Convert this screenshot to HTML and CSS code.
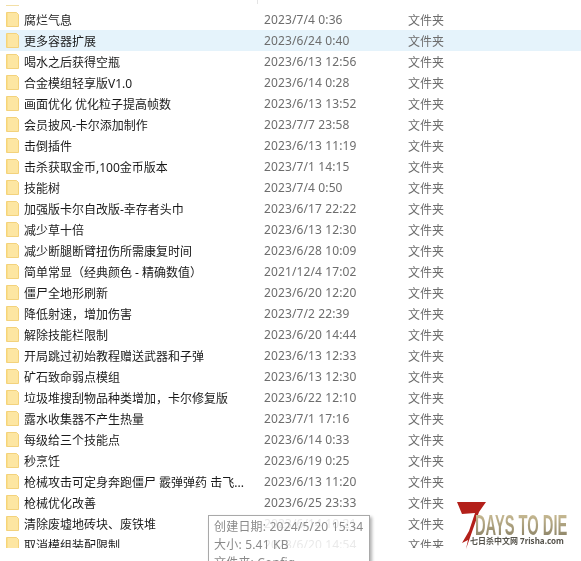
FILE: index.html
```html
<!DOCTYPE html>
<html lang="zh-CN">
<head>
    <meta charset="UTF-8">
    <title>文件夹列表</title>
    <link rel="stylesheet" href="styles.css">
</head>
<body>
    <svg class="defs" width="0" height="0">
        <symbol id="folder" viewBox="0 0 13 15">
            <path d="M0.5 0.5H10.5L12.5 2.5V14.5H0.5Z" fill="#fde6a2" stroke="#f3d27c"/>
            <path d="M1 1V14" stroke="#f8d675" fill="none"/>
        </symbol>
    </svg>

    <div class="col-tick"></div>
    <div class="file-list">
        <div class="stub"></div>
        <div class="row"><svg class="folder"><use href="#folder"/></svg><span class="name">腐烂气息</span><span class="date">2023/7/4 0:36</span><span class="type">文件夹</span></div>
        <div class="row hover"><svg class="folder"><use href="#folder"/></svg><span class="name">更多容器扩展</span><span class="date">2023/6/24 0:40</span><span class="type">文件夹</span></div>
        <div class="row"><svg class="folder"><use href="#folder"/></svg><span class="name">喝水之后获得空瓶</span><span class="date">2023/6/13 12:56</span><span class="type">文件夹</span></div>
        <div class="row"><svg class="folder"><use href="#folder"/></svg><span class="name">合金模组轻享版V1.0</span><span class="date">2023/6/14 0:28</span><span class="type">文件夹</span></div>
        <div class="row"><svg class="folder"><use href="#folder"/></svg><span class="name">画面优化 优化粒子提高帧数</span><span class="date">2023/6/13 13:52</span><span class="type">文件夹</span></div>
        <div class="row"><svg class="folder"><use href="#folder"/></svg><span class="name">会员披风-卡尔添加制作</span><span class="date">2023/7/7 23:58</span><span class="type">文件夹</span></div>
        <div class="row"><svg class="folder"><use href="#folder"/></svg><span class="name">击倒插件</span><span class="date">2023/6/13 11:19</span><span class="type">文件夹</span></div>
        <div class="row"><svg class="folder"><use href="#folder"/></svg><span class="name">击杀获取金币,100金币版本</span><span class="date">2023/7/1 14:15</span><span class="type">文件夹</span></div>
        <div class="row"><svg class="folder"><use href="#folder"/></svg><span class="name">技能树</span><span class="date">2023/7/4 0:50</span><span class="type">文件夹</span></div>
        <div class="row"><svg class="folder"><use href="#folder"/></svg><span class="name">加强版卡尔自改版-幸存者头巾</span><span class="date">2023/6/17 22:22</span><span class="type">文件夹</span></div>
        <div class="row"><svg class="folder"><use href="#folder"/></svg><span class="name">减少草十倍</span><span class="date">2023/6/13 12:30</span><span class="type">文件夹</span></div>
        <div class="row"><svg class="folder"><use href="#folder"/></svg><span class="name">减少断腿断臂扭伤所需康复时间</span><span class="date">2023/6/28 10:09</span><span class="type">文件夹</span></div>
        <div class="row"><svg class="folder"><use href="#folder"/></svg><span class="name">简单常显（经典颜色 - 精确数值）</span><span class="date">2021/12/4 17:02</span><span class="type">文件夹</span></div>
        <div class="row"><svg class="folder"><use href="#folder"/></svg><span class="name">僵尸全地形刷新</span><span class="date">2023/6/20 12:20</span><span class="type">文件夹</span></div>
        <div class="row"><svg class="folder"><use href="#folder"/></svg><span class="name">降低射速，增加伤害</span><span class="date">2023/7/2 22:39</span><span class="type">文件夹</span></div>
        <div class="row"><svg class="folder"><use href="#folder"/></svg><span class="name">解除技能栏限制</span><span class="date">2023/6/20 14:44</span><span class="type">文件夹</span></div>
        <div class="row"><svg class="folder"><use href="#folder"/></svg><span class="name">开局跳过初始教程赠送武器和子弹</span><span class="date">2023/6/13 12:33</span><span class="type">文件夹</span></div>
        <div class="row"><svg class="folder"><use href="#folder"/></svg><span class="name">矿石致命弱点模组</span><span class="date">2023/6/13 12:30</span><span class="type">文件夹</span></div>
        <div class="row"><svg class="folder"><use href="#folder"/></svg><span class="name">垃圾堆搜刮物品种类增加，卡尔修复版</span><span class="date">2023/6/22 12:10</span><span class="type">文件夹</span></div>
        <div class="row"><svg class="folder"><use href="#folder"/></svg><span class="name">露水收集器不产生热量</span><span class="date">2023/7/1 17:16</span><span class="type">文件夹</span></div>
        <div class="row"><svg class="folder"><use href="#folder"/></svg><span class="name">每级给三个技能点</span><span class="date">2023/6/14 0:33</span><span class="type">文件夹</span></div>
        <div class="row"><svg class="folder"><use href="#folder"/></svg><span class="name">秒烹饪</span><span class="date">2023/6/19 0:25</span><span class="type">文件夹</span></div>
        <div class="row"><svg class="folder"><use href="#folder"/></svg><span class="name">枪械攻击可定身奔跑僵尸 霰弹弹药 击飞...</span><span class="date">2023/6/13 11:20</span><span class="type">文件夹</span></div>
        <div class="row"><svg class="folder"><use href="#folder"/></svg><span class="name">枪械优化改善</span><span class="date">2023/6/25 23:33</span><span class="type">文件夹</span></div>
        <div class="row"><svg class="folder"><use href="#folder"/></svg><span class="name">清除废墟地砖块、废铁堆</span><span class="date">2023/6/14 10:21</span><span class="type">文件夹</span></div>
        <div class="row"><svg class="folder"><use href="#folder"/></svg><span class="name">取消模组装配限制</span><span class="date">2023/6/20 14:54</span><span class="type">文件夹</span></div>
    </div>

    <!-- hover tooltip, runs off the bottom of the shot -->
    <div class="tooltip">
        <div>创建日期: 2024/5/20 15:34</div>
        <div>大小: 5.41 KB</div>
        <div>文件夹: Config</div>
    </div>

    <div class="logo">
        <svg class="logo-seven" viewBox="0 0 30 48">
            <path d="M1 0H30L23 10L10 47L12 38L6 41L13 29L19 11L6 12Z" fill="#b3201a"/>
        </svg>
        <div class="logo-title">DAYS TO DIE</div>
        <div class="logo-sub">七日杀中文网 7risha.com</div>
    </div>
</body>
</html>
```

FILE: styles.css
```css
* {
    margin: 0;
    padding: 0;
    box-sizing: border-box;
}

html, body {
    height: 100%;
    overflow: hidden;
}

body {
    position: relative;
    background: #fff;
    font-family: "Noto Sans", "Noto Sans CJK SC", sans-serif;
    font-size: 12px;
    color: #1a1a1a;
    filter: blur(0.3px);
}

.defs {
    position: absolute;
}

.col-tick {
    position: absolute;
    top: 0;
    left: 257px;
    width: 1px;
    height: 4px;
    background: #e4e4e4;
}

.file-list {
    height: 548px;
    overflow: hidden;
    padding-top: 9px;
}

.stub {
    position: absolute;
    top: 5px;
    left: 6px;
    width: 13px;
    height: 1px;
    background: #f3dfa6;
}

.row {
    display: flex;
    align-items: center;
    height: 21px;
    white-space: nowrap;
}

.row.hover {
    background: #e5f3fb;
}

.folder {
    flex: none;
    width: 13px;
    height: 15px;
    margin-left: 6px;
}

.name {
    width: 240px;
    margin-left: 5px;
}

.date {
    width: 144px;
    color: #6d6d6d;
    letter-spacing: 0.12px;
}

.type {
    color: #6d6d6d;
}

.tooltip {
    position: absolute;
    left: 208px;
    top: 515px;
    width: 162px;
    height: 60px;
    padding: 2px 5px;
    border: 1px solid #a9a9a9;
    background: rgba(255, 255, 255, 0.85);
    box-shadow: 2px 2px 3px rgba(0, 0, 0, 0.3);
    color: #8a8a8a;
    line-height: 18px;
    letter-spacing: 0.2px;
}

.logo {
    position: absolute;
    left: 456px;
    top: 502px;
    width: 125px;
    height: 50px;
}

.logo-seven {
    position: absolute;
    left: 0;
    top: 0;
    width: 30px;
    height: 48px;
}

.logo-title {
    position: absolute;
    left: 19px;
    top: 11px;
    font-family: "Liberation Sans", sans-serif;
    font-size: 30px;
    font-weight: 700;
    line-height: 24px;
    white-space: nowrap;
    color: #a89a78;
    background: linear-gradient(#cbbd95, #8d8468);
    -webkit-background-clip: text;
    background-clip: text;
    -webkit-text-fill-color: transparent;
    transform: scaleX(0.49);
    transform-origin: left top;
}

.logo-sub {
    position: absolute;
    left: 14px;
    top: 35px;
    font-size: 8px;
    font-weight: 700;
    line-height: 8px;
    white-space: nowrap;
    color: #55534c;
}
```
